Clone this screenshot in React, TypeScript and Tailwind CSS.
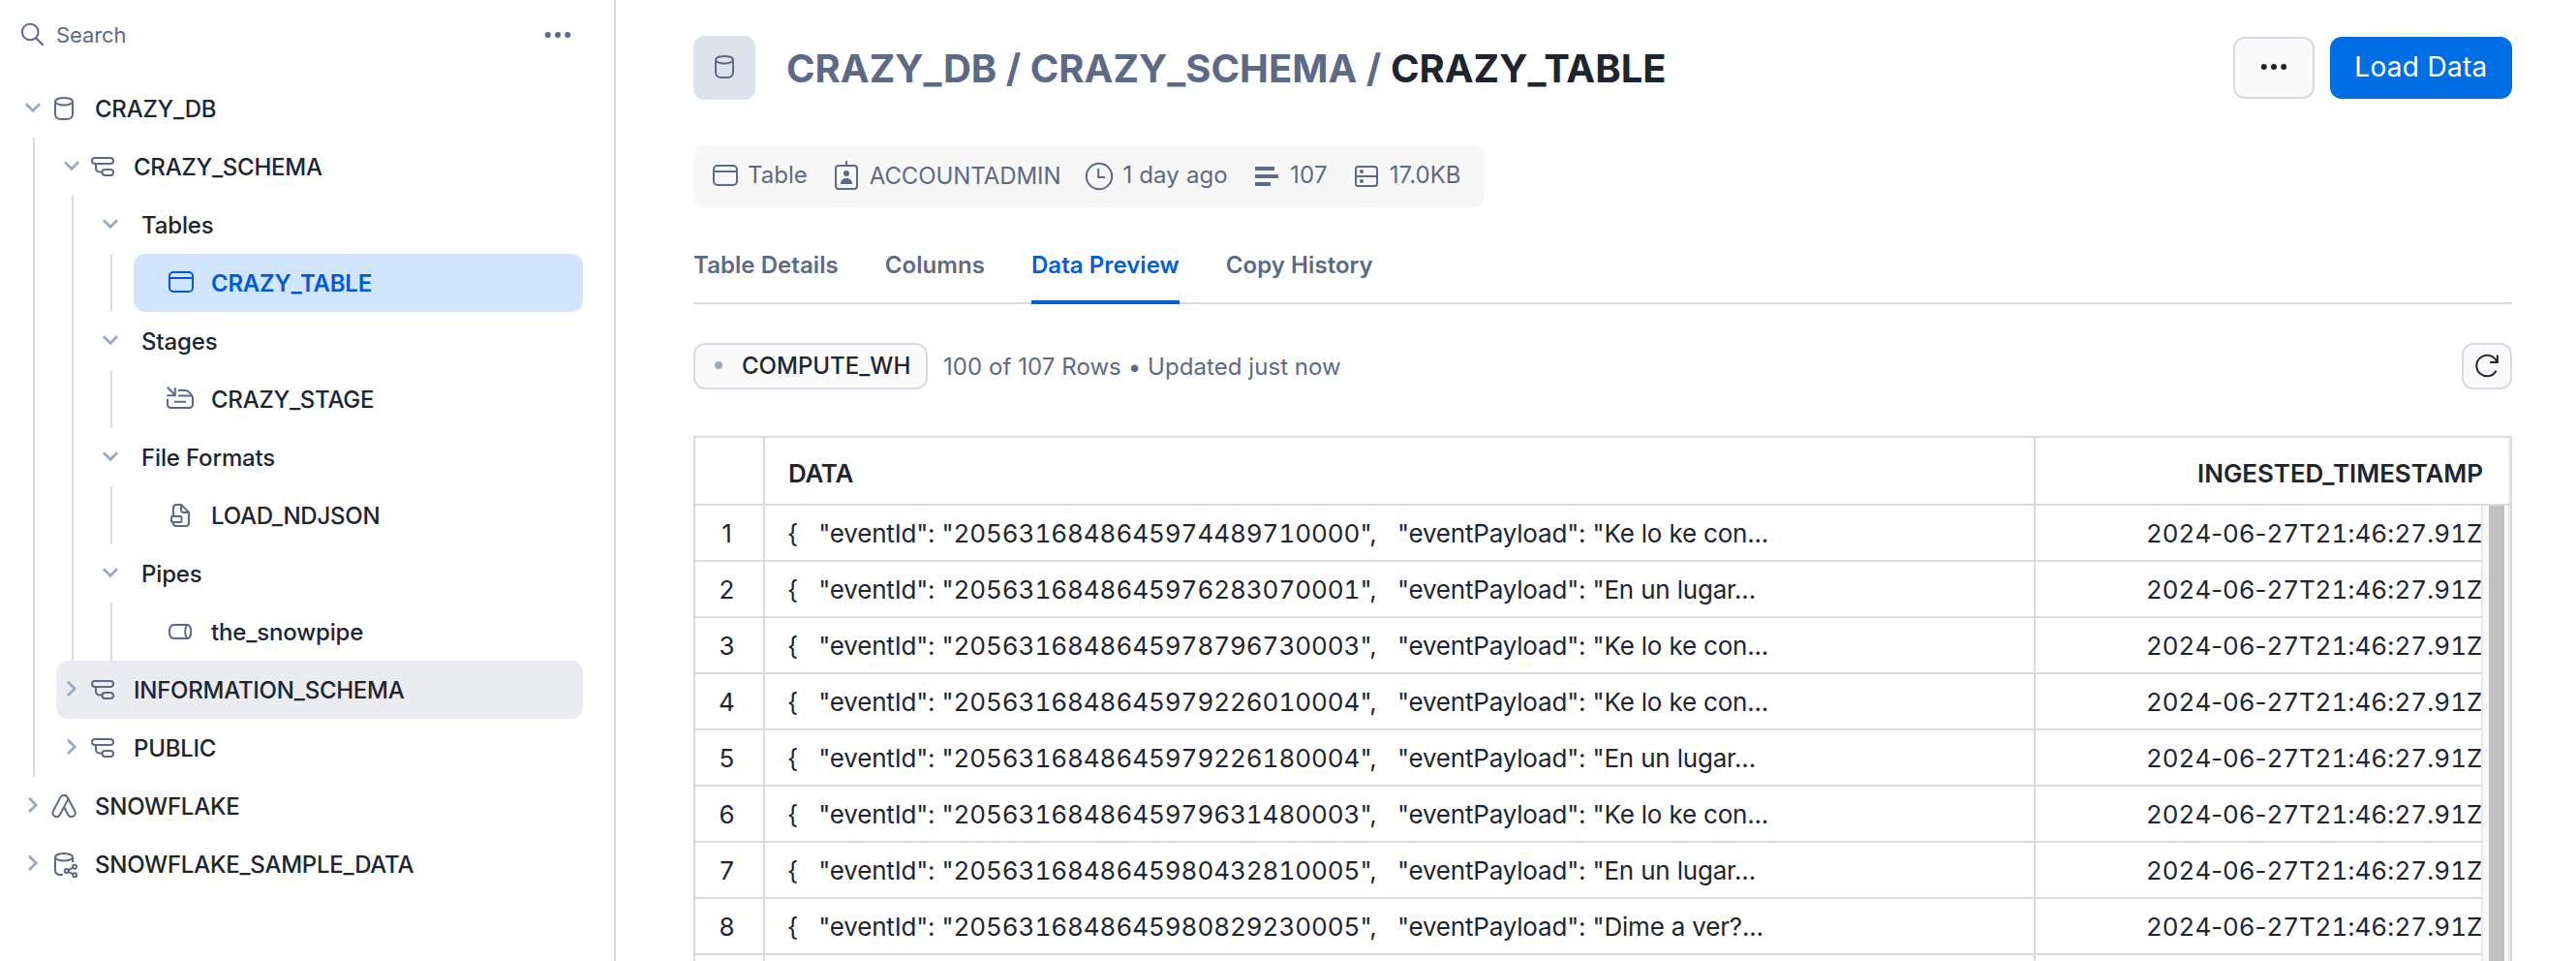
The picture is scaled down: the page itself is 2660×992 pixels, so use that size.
import type { ReactNode } from "react";

/* ---------- icons: all drawn on a 32px box ---------- */

function Icon({ children, className = "" }: { children: ReactNode; className?: string }) {
  return (
    <svg
      viewBox="0 0 32 32"
      fill="none"
      stroke="currentColor"
      strokeWidth="2"
      className={`h-8 w-8 shrink-0 ${className}`}
    >
      {children}
    </svg>
  );
}

const SearchIcon = () => (
  <Icon>
    <circle cx="13.2" cy="13" r="8.3" />
    <path d="M18.6 18.8 26.6 26.8" />
  </Icon>
);
const Dots = () => (
  <Icon>
    <g fill="currentColor" stroke="none">
      <circle cx="5.8" cy="16" r="3" />
      <circle cx="16" cy="16" r="3" />
      <circle cx="26.2" cy="16" r="3" />
    </g>
  </Icon>
);
const ChevronDown = () => (
  <Icon>
    <path d="M9 11.2 16 18.2 23 11.2" strokeWidth="2.8" />
  </Icon>
);
const ChevronRight = () => (
  <Icon>
    <path d="M12 7.7 19.2 14.9 12 22.1" strokeWidth="2.8" />
  </Icon>
);
const DatabaseIcon = () => (
  <Icon>
    <ellipse cx="16" cy="8.7" rx="9" ry="3.8" />
    <path d="M7 8.7V21.5C7 25.5 9.5 27 13 27H19C22.5 27 25 25.5 25 21.5V8.7" />
  </Icon>
);
const SchemaIcon = () => (
  <Icon>
    <rect x="5" y="7" width="22" height="6" rx="3" />
    <rect x="15.5" y="19" width="11.5" height="6" rx="3" />
    <path d="M9 13v5a3.4 3.4 0 0 0 3.4 3.4H15.6" />
  </Icon>
);
const TableIcon = () => (
  <Icon>
    <rect x="5" y="5" width="24" height="20" rx="4" />
    <path d="M5 11h24" />
  </Icon>
);
const StageIcon = () => (
  <Icon>
    <path d="M2.8 3.8 10.8 11.8M10.8 4.2V12.2H2.4" />
    <path d="M14 7h7.5c1.6 0 2.6.6 3.6 1.6l2.6 3c.9 1 1.3 1.8 1.3 3V21.500a3.500 3.500 0 0 1-3.500 3.500h-19a3.500 3.500 0 0 1-3.500-3.500V15.800" />
    <path d="M14 12.500h14M10 18.700h12" />
  </Icon>
);
const FileIcon = () => (
  <Icon>
    <path d="M9 17V8a3 3 0 0 1 3-3h5.200L25 12.800V24a3 3 0 0 1-3 3H12a3 3 0 0 1-3-3v-1" />
    <path d="M17 5v5.500a2.500 2.500 0 0 0 2.500 2.500H25" />
    <rect x="7" y="17" width="10.500" height="6" rx="1" />
  </Icon>
);
const PipeIcon = () => (
  <Icon>
    <path d="M24 9H9.500C6.600 9 5 12 5 16s1.600 7 4.500 7H24" />
    <ellipse cx="24.200" cy="16" rx="3" ry="7" />
  </Icon>
);
const AppIcon = () => (
  <Icon>
    <path d="M12.500 6.900 4.900 21.300a3.950 3.950 0 0 0 7 3.700L19.500 10.600a3.950 3.950 0 0 0-7-3.700z" />
    <path d="M19.500 6.900 27.300 21.300a3.950 3.950 0 0 1-7 3.700L16.200 17.200" />
  </Icon>
);
const SharedDatabaseIcon = () => (
  <Icon>
    <ellipse cx="16" cy="8.700" rx="9" ry="3.800" />
    <path d="M7 8.700V22c0 3.200 2.200 5 5.500 5H15M25 8.700V14" />
    <circle cx="18.700" cy="23" r="2" />
    <circle cx="27" cy="18.800" r="2" />
    <circle cx="27.200" cy="27.200" r="2" />
    <path d="M20.500 22.100 25.200 19.700M20.500 23.900 25.400 26.300" />
  </Icon>
);
const BadgeIcon = () => (
  <Icon>
    <rect x="5" y="5" width="22" height="24" rx="3" />
    <path d="M16 0v5" />
    <g fill="currentColor" stroke="none">
      <circle cx="16" cy="13" r="3" />
      <path d="M10 24c0-3.800 2.200-6 6-6s6 2.200 6 6z" />
    </g>
  </Icon>
);
const ClockIcon = () => (
  <Icon>
    <circle cx="16" cy="16" r="13.200" />
    <path d="M15.200 8V17H22" />
  </Icon>
);
const RowsIcon = () => (
  <Icon>
    <g fill="currentColor" stroke="none">
      <rect x="4" y="6" width="20" height="4" rx=".5" />
      <rect x="4" y="14" width="24" height="4" rx=".5" />
      <rect x="4" y="22" width="16" height="4" rx=".5" />
    </g>
  </Icon>
);
const StorageIcon = () => (
  <Icon>
    <rect x="5" y="6" width="22" height="20" rx="2.500" />
    <path d="M5 16h22" />
    <g fill="currentColor" stroke="none">
      <circle cx="11" cy="11" r="2" />
      <circle cx="11" cy="21" r="2" />
    </g>
  </Icon>
);
const RefreshIcon = () => (
  <Icon>
    <path d="M25.600 20.700A10.800 10.800 0 1 1 25.600 10.300L26.600 11.600" />
    <path d="M26.900 4.400V11.900H19.200" />
  </Icon>
);

/* ---------- sidebar tree ---------- */

type NodeProps = {
  label: string;
  icon?: ReactNode;
  open?: boolean;
  leaf?: boolean;
  active?: boolean;
  hovered?: boolean;
  children?: ReactNode;
};

function TreeNode({ label, icon, open, leaf, active, hovered, children }: NodeProps) {
  const tone = active
    ? "bg-[#d2e5fe] text-[#0059d6] font-semibold"
    : hovered
      ? "bg-[#ebecf0] font-medium"
      : "font-medium";
  const spacing = active
    ? "tracking-[-0.24px]"
    : /[a-z]/.test(label)
      ? "tracking-[-0.15px]"
      : "tracking-[-0.25px]";
  return (
    <div>
      <div className={`flex h-[60px] items-center rounded-xl ${tone}`}>
        {leaf ? (
          <span className="w-8" />
        ) : (
          <span className="text-[#98a9c0]">{open ? <ChevronDown /> : <ChevronRight />}</span>
        )}
        {icon && <span className={active ? "" : "text-[#5d6a85]"}>{icon}</span>}
        <span className={`ml-4 pt-0.5 whitespace-nowrap ${spacing}`}>{label}</span>
      </div>
      {children}
    </div>
  );
}

const Branch = ({ children }: { children: ReactNode }) => (
  <div className="ml-4 border-l-2 border-[#d5dae4] pl-[22px]">{children}</div>
);

function Sidebar() {
  return (
    <aside className="w-[636px] shrink-0 border-r-2 border-[#d5dae4] pr-8 pl-[18px]">
      <div className="mb-2.5 flex h-[72px] items-center text-[#5d6a85]">
        <SearchIcon />
        <span className="ml-2 grow text-[22px] tracking-[-0.1px]">Search</span>
        <span className="mr-2.5">
          <Dots />
        </span>
      </div>
      <TreeNode label="CRAZY_DB" icon={<DatabaseIcon />} open>
        <Branch>
          <TreeNode label="CRAZY_SCHEMA" icon={<SchemaIcon />} open>
            <Branch>
              <TreeNode label="Tables" open>
                <Branch>
                  <TreeNode label="CRAZY_TABLE" icon={<TableIcon />} leaf active />
                </Branch>
              </TreeNode>
              <TreeNode label="Stages" open>
                <Branch>
                  <TreeNode label="CRAZY_STAGE" icon={<StageIcon />} leaf />
                </Branch>
              </TreeNode>
              <TreeNode label="File Formats" open>
                <Branch>
                  <TreeNode label="LOAD_NDJSON" icon={<FileIcon />} leaf />
                </Branch>
              </TreeNode>
              <TreeNode label="Pipes" open>
                <Branch>
                  <TreeNode label="the_snowpipe" icon={<PipeIcon />} leaf />
                </Branch>
              </TreeNode>
            </Branch>
          </TreeNode>
          <TreeNode label="INFORMATION_SCHEMA" icon={<SchemaIcon />} hovered />
          <TreeNode label="PUBLIC" icon={<SchemaIcon />} />
        </Branch>
      </TreeNode>
      <TreeNode label="SNOWFLAKE" icon={<AppIcon />} />
      <TreeNode label="SNOWFLAKE_SAMPLE_DATA" icon={<SharedDatabaseIcon />} />
    </aside>
  );
}

/* ---------- header ---------- */

function TitleBar() {
  return (
    <div className="mt-[37px] flex h-[66px] items-center">
      <span className="flex h-[66px] w-16 items-center justify-center rounded-xl bg-[#dce3eb] pb-0.5 text-[#5d6a85]">
        <DatabaseIcon />
      </span>
      <h1 className="ml-8 grow pt-px text-[40px] leading-none font-bold text-[#5d6a85]">
        CRAZY_DB / CRAZY_SCHEMA / <span className="text-[#1e252f]">CRAZY_TABLE</span>
      </h1>
      <button className="mr-4 flex h-16 w-[84px] items-center justify-center rounded-xl border-2 border-[#d5dae4] bg-[#fbfbfb] pb-0.5">
        <Dots />
      </button>
      <button className="flex h-16 w-[188px] items-center justify-center rounded-xl bg-[#006ee4] pb-0.5 text-[28px] tracking-[0.3px] text-white">
        Load Data
      </button>
    </div>
  );
}

const Meta = ({ icon, children }: { icon: ReactNode; children: ReactNode }) => (
  <span className="flex items-center gap-2">
    {icon}
    {children}
  </span>
);

function MetaBar() {
  return (
    <div className="mt-[47px] flex h-16 w-[817px] items-center gap-6 rounded-xl bg-[#f7f7f7] pl-4 whitespace-nowrap text-[#5d6a85]">
      <Meta icon={<TableIcon />}>
        <span className="pb-[3px]">Table</span>
      </Meta>
      <Meta icon={<BadgeIcon />}>
        <span className="tracking-[-0.08px]">ACCOUNTADMIN</span>
      </Meta>
      <Meta icon={<ClockIcon />}>
        <span className="pb-[3px] tracking-[0.15px]">1 day ago</span>
      </Meta>
      <Meta icon={<RowsIcon />}>
        <span className="pb-[3px] tracking-[0.3px]">107</span>
      </Meta>
      <Meta icon={<StorageIcon />}>
        <span className="pb-[3px]">17.0KB</span>
      </Meta>
    </div>
  );
}

function Tabs() {
  const tabs = ["Table Details", "Columns", "Data Preview", "Copy History"];
  return (
    <div className="flex h-[100px] gap-12 border-b-2 border-[#d5dae4] font-semibold tracking-[0.06px] text-[#5d6a85]">
      {tabs.map((t) => (
        <span
          key={t}
          className={
            t === "Data Preview"
              ? "-mb-0.5 border-b-4 border-[#005fda] pt-11 text-[#005fda]"
              : "pt-11"
          }
        >
          {t}
        </span>
      ))}
    </div>
  );
}

function Status() {
  return (
    <div className="mt-10 flex h-12 items-center">
      <span className="flex h-12 w-[242px] items-center rounded-xl border-2 border-[#d5dae4] bg-[#fbfbfb] pl-5 font-medium">
        <span className="mr-5 mb-0.5 h-2 w-2 rounded-full bg-[#98a9c0]" />
        COMPUTE_WH
      </span>
      <span className="ml-4 grow pt-px tracking-[0.06px] text-[#5d6a85]">
        100 of 107 Rows • Updated just now
      </span>
      <button className="flex h-12 w-[52px] items-center justify-center rounded-xl border-2 border-[#d5dae4] bg-[#fbfbfb]">
        <RefreshIcon />
      </button>
    </div>
  );
}

/* ---------- data grid ---------- */

const records = [
  ["2056316848645974489710000", "Ke lo ke con..."],
  ["2056316848645976283070001", "En un lugar..."],
  ["2056316848645978796730003", "Ke lo ke con..."],
  ["2056316848645979226010004", "Ke lo ke con..."],
  ["2056316848645979226180004", "En un lugar..."],
  ["2056316848645979631480003", "Ke lo ke con..."],
  ["2056316848645980432810005", "En un lugar..."],
  ["2056316848645980829230005", "Dime a ver?..."],
  ["", ""],
];

/* Fixed-width digits, while punctuation keeps its natural width. */
const Figures = ({ text }: { text: string }) => (
  <>
    {text.split(/(\d+)/).map((part, i) =>
      /\d/.test(part) ? (
        <span key={i} className="tracking-[-0.06px] tabular-nums">
          {part}
        </span>
      ) : (
        part
      ),
    )}
  </>
);

function Grid() {
  return (
    <div className="mt-12 h-[542px] overflow-hidden border-t-2 border-r-2 border-l-2 border-t-[#dadada] border-r-[#d5dae4] border-l-[#dadada] text-[26px]">
      <div className="flex h-[70px] items-center border-b-2 border-[#dadada] font-semibold">
        <span className="h-full w-[72px] shrink-0 border-r-2 border-[#dadada]" />
        <span className="flex h-full w-[1312px] shrink-0 items-center border-r-2 border-[#dadada] pt-1.5 pl-6 tracking-[-0.3px]">
          DATA
        </span>
        <span className="grow pt-1.5 pr-[26px] text-right tracking-[-0.06px]">
          INGESTED_TIMESTAMP
        </span>
        <span className="h-full w-0.5 bg-[#eeeeee]" />
      </div>
      <div className="flex">
        <div className="w-[1844px] shrink-0">
          {records.map(([id, payload], i) => (
            <div key={i} className="flex h-[58px] border-b-2 border-[#dadada]">
              <span className="flex w-[72px] shrink-0 items-center justify-center border-r-2 border-[#dadada] pt-0.5 pr-[5px]">
                {id && i + 1}
              </span>
              <span className="flex w-[1312px] shrink-0 items-center border-r-2 border-[#dadada] pt-0.5 pl-[23px]">
                {id && (
                  <span className="tracking-[-0.19px] whitespace-pre">
                    {'{   "eventId": "'}
                    <Figures text={id} />
                    {'",   "eventPayload": "'}
                    {payload}
                  </span>
                )}
              </span>
              <span className="flex items-center pt-0.5 pl-[114px] tracking-[-0.19px] whitespace-nowrap">
                {id && (
                  <span>
                    <Figures text="2024-06-27T21:46:27.91Z" />
                  </span>
                )}
              </span>
            </div>
          ))}
        </div>
        <div className="flex grow border-r-2 border-l-2 border-[#e8e8e8] bg-[#fafafa] pl-1.5">
          <span className="w-4 bg-[#c1c1c1]" />
        </div>
      </div>
    </div>
  );
}

export default function App() {
  return (
    <div className="flex h-[992px] w-[2660px] overflow-hidden bg-white font-['Inter',sans-serif] text-2xl leading-8 text-[#1e252f]">
      <Sidebar />
      <main className="grow pr-[66px] pl-20">
        <TitleBar />
        <MetaBar />
        <Tabs />
        <Status />
        <Grid />
      </main>
    </div>
  );
}
